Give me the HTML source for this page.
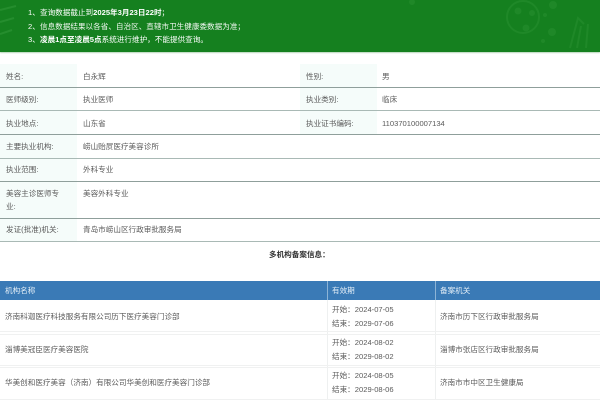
<!DOCTYPE html>
<html lang="zh-CN">
<head>
<meta charset="utf-8">
<style>
html,body{margin:0;padding:0;background:#fff}
body{width:600px;height:400px;overflow:hidden;position:relative;font-family:"Liberation Sans","Noto Sans CJK SC",sans-serif;font-size:7.6px;color:#5a5a5a;filter:blur(.3px)}
div{position:absolute;white-space:nowrap}
.t{line-height:12px;height:12px}
.l{height:1px;left:0;width:600px;background:#8f9f9b}
.g{left:0;width:77px;background:#f5fcfa}
.g2{left:300px;width:77px;background:#f5fcfa}
.n{color:#fff;left:28px}
.th{color:#e6f0f8;top:285px}
.b{height:1px;background:#f0f1f1;left:0;width:600px}
</style>
</head>
<body>
<div style="left:0;top:0;width:600px;height:52px;background:#15801f;box-shadow:0 1px 1px #b9d6bb"></div>
<svg style="position:absolute;left:0;top:0" width="600" height="52" viewBox="0 0 600 52">
<g fill="none" stroke="#1f8828" stroke-width="2">
<circle cx="523" cy="17" r="16"/>
<path d="M570 48l8-30 6 6M577 48l4-22M586 48l2-24"/>
<path d="M0 10l16-4M0 22l14-4M0 34l12-4" stroke="#258d2e"/>
</g>
<g fill="#1f8828">
<circle cx="518" cy="11" r="3.5"/><circle cx="526" cy="28" r="3.5"/><circle cx="532" cy="13" r="3"/>
<circle cx="552" cy="32" r="4"/><circle cx="553" cy="5" r="4"/><circle cx="545" cy="15" r="2"/><circle cx="543" cy="41" r="2"/>
<circle cx="412" cy="2" r="3"/>
</g>
</svg>
<div class="t n" style="top:7px">1、</div><div class="t" style="left:40px;top:7px;color:#fff">查询数据截止到<b>2025年3月23日22时</b>；</div>
<div class="t n" style="top:21px">2、</div><div class="t" style="left:40px;top:21px;color:#f2f8f2">信息数据结果以各省、自治区、直辖市卫生健康委数据为准；</div>
<div class="t n" style="top:34px">3、</div><div class="t" style="left:40px;top:34px;color:#fff"><b>凌晨1点至凌晨5点</b>系统进行维护，不能提供查询。</div>

<div class="g" style="top:64px;height:177px"></div>
<div class="g2" style="top:64px;height:70px"></div>

<div class="l" style="top:87px"></div>
<div class="l" style="top:110px;background:#a9b9b5"></div>
<div class="l" style="top:134px"></div>
<div class="l" style="top:158px;background:#a9b9b5"></div>
<div class="l" style="top:181px"></div>
<div class="l" style="top:218px"></div>
<div class="l" style="top:241px;background:#a9b9b5"></div>

<div class="t" style="left:6px;top:71px">姓名:</div><div class="t" style="left:83px;top:71px">白永辉</div>
<div class="t" style="left:306px;top:71px">性别:</div><div class="t" style="left:382px;top:71px">男</div>
<div class="t" style="left:6px;top:94px">医师级别:</div><div class="t" style="left:83px;top:94px">执业医师</div>
<div class="t" style="left:306px;top:94px">执业类别:</div><div class="t" style="left:382px;top:94px">临床</div>
<div class="t" style="left:6px;top:118px">执业地点:</div><div class="t" style="left:83px;top:118px">山东省</div>
<div class="t" style="left:306px;top:118px">执业证书编码:</div><div class="t" style="left:382px;top:118px">110370100007134</div>
<div class="t" style="left:6px;top:141px">主要执业机构:</div><div class="t" style="left:83px;top:141px">崂山贻屃医疗美容诊所</div>
<div class="t" style="left:6px;top:164px">执业范围:</div><div class="t" style="left:83px;top:164px">外科专业</div>
<div class="t" style="left:6px;top:188px">美容主诊医师专</div><div class="t" style="left:83px;top:188px">美容外科专业</div>
<div class="t" style="left:6px;top:201px">业:</div>
<div class="t" style="left:6px;top:224px">发证(批准)机关:</div><div class="t" style="left:83px;top:224px">青岛市崂山区行政审批服务局</div>

<div class="t" style="left:269px;top:249px;color:#333;font-weight:bold">多机构备案信息：</div>

<div style="left:0;top:281px;width:600px;height:19px;background:#3a7ab6"></div>
<div style="left:327px;top:281px;width:1px;height:19px;background:#8db4d6"></div>
<div style="left:435px;top:281px;width:1px;height:19px;background:#8db4d6"></div>
<div class="t th" style="left:5px">机构名称</div>
<div class="t th" style="left:332px">有效期</div>
<div class="t th" style="left:440px">备案机关</div>

<div style="left:327px;top:300px;width:1px;height:100px;background:#eef0f0"></div>
<div style="left:435px;top:300px;width:1px;height:100px;background:#eef0f0"></div>
<div class="b" style="top:331px"></div>
<div class="b" style="top:334px"></div>
<div class="b" style="top:365px"></div>
<div class="b" style="top:367px"></div>
<div class="b" style="top:399px"></div>

<div class="t" style="left:5px;top:311px">济南科迦医疗科技服务有限公司历下医疗美容门诊部</div>
<div class="t" style="left:332px;top:304px">开始：2024-07-05</div>
<div class="t" style="left:332px;top:318px">结束：2029-07-06</div>
<div class="t" style="left:440px;top:311px">济南市历下区行政审批服务局</div>

<div class="t" style="left:5px;top:344px">淄博美冠臣医疗美容医院</div>
<div class="t" style="left:332px;top:337px">开始：2024-08-02</div>
<div class="t" style="left:332px;top:351px">结束：2029-08-02</div>
<div class="t" style="left:440px;top:344px">淄博市张店区行政审批服务局</div>

<div class="t" style="left:5px;top:377px">华美创和医疗美容（济南）有限公司华美创和医疗美容门诊部</div>
<div class="t" style="left:332px;top:370px">开始：2024-08-05</div>
<div class="t" style="left:332px;top:384px">结束：2029-08-06</div>
<div class="t" style="left:440px;top:377px">济南市市中区卫生健康局</div>
</body>
</html>
